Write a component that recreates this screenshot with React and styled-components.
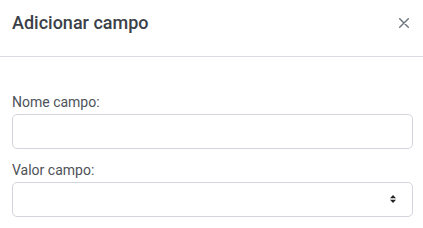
import React from 'react'
import styled, { createGlobalStyle } from 'styled-components'

const GlobalStyle = createGlobalStyle`
   body {
      margin: 0;
      background: #ffffff;
      font-family: Roboto, "Liberation Sans", Arial, sans-serif;
   }
`
const ModalContent = styled.div`
   width: 423px;
   height: 228px;
   background-color: #ffffff;
   overflow: hidden;
`
const ModalHeader = styled.div`
   display: flex;
   justify-content: space-between;
   align-items: flex-start;
   box-sizing: border-box;
   height: 57px;
   padding: 9px 12px 0;
   border-bottom: 1px solid #dadae3;
`
const Title = styled.h5`
   margin: 0;
   font-size: 18px;
   line-height: 27px;
   font-weight: 500;
   color: #3a3f48;
`
const CloseBtn = styled.button`
   display: flex;
   align-items: center;
   justify-content: center;
   height: 27px;
   padding: 0 2px 0 0;
   border: none;
   background: none;
   cursor: pointer;
   color: #6c757d;
`
const ModalBody = styled.div`
   padding: 35px 10px 0 12px;
`
const Label = styled.label`
   display: block;
   font-size: 14px;
   line-height: 21px;
   color: #4d5259;
   margin-bottom: 1px;
`
const Field = styled.div`
   position: relative;
   margin-bottom: ${p => p.$gap || 0}px;
`
const TextInput = styled.input`
   display: block;
   box-sizing: border-box;
   width: 100%;
   height: 35px;
   border: 1px solid #d3d4dd;
   border-radius: 5px;
   padding: 6px 12px;
   font-size: 14px;
   font-family: inherit;
   outline: none;
`
const Select = styled.select`
   display: block;
   box-sizing: border-box;
   width: 100%;
   height: 35px;
   border: 1px solid #d3d4dd;
   border-radius: 5px;
   padding: 6px 12px;
   font-size: 14px;
   font-family: inherit;
   background: #ffffff;
   appearance: none;
   outline: none;
`
const SelectArrow = styled.svg`
   position: absolute;
   right: 17px;
   top: 13px;
   pointer-events: none;
`

const App = () => {
   return (
      <>
         <GlobalStyle />
         <ModalContent>
            <ModalHeader>
               <Title>Adicionar campo</Title>
               <CloseBtn aria-label="Fechar">
                  <svg width="10" height="10" viewBox="0 0 10 10">
                     <path d="M0.7 0.7 L9.3 9.3 M9.3 0.7 L0.7 9.3" stroke="currentColor" strokeWidth="1.4" strokeLinecap="round" />
                  </svg>
               </CloseBtn>
            </ModalHeader>
            <ModalBody>
               <Label>Nome campo:</Label>
               <Field $gap={11}>
                  <TextInput type="text" />
               </Field>
               <Label>Valor campo:</Label>
               <Field>
                  <Select defaultValue="">
                     <option value=""></option>
                  </Select>
                  <SelectArrow width="6" height="8" viewBox="0 0 6 8">
                     <path d="M0 3.3 L3 0 L6 3.3 Z M0 4.7 L3 8 L6 4.7 Z" fill="#222" />
                  </SelectArrow>
               </Field>
            </ModalBody>
         </ModalContent>
      </>
   )
}

export default App
